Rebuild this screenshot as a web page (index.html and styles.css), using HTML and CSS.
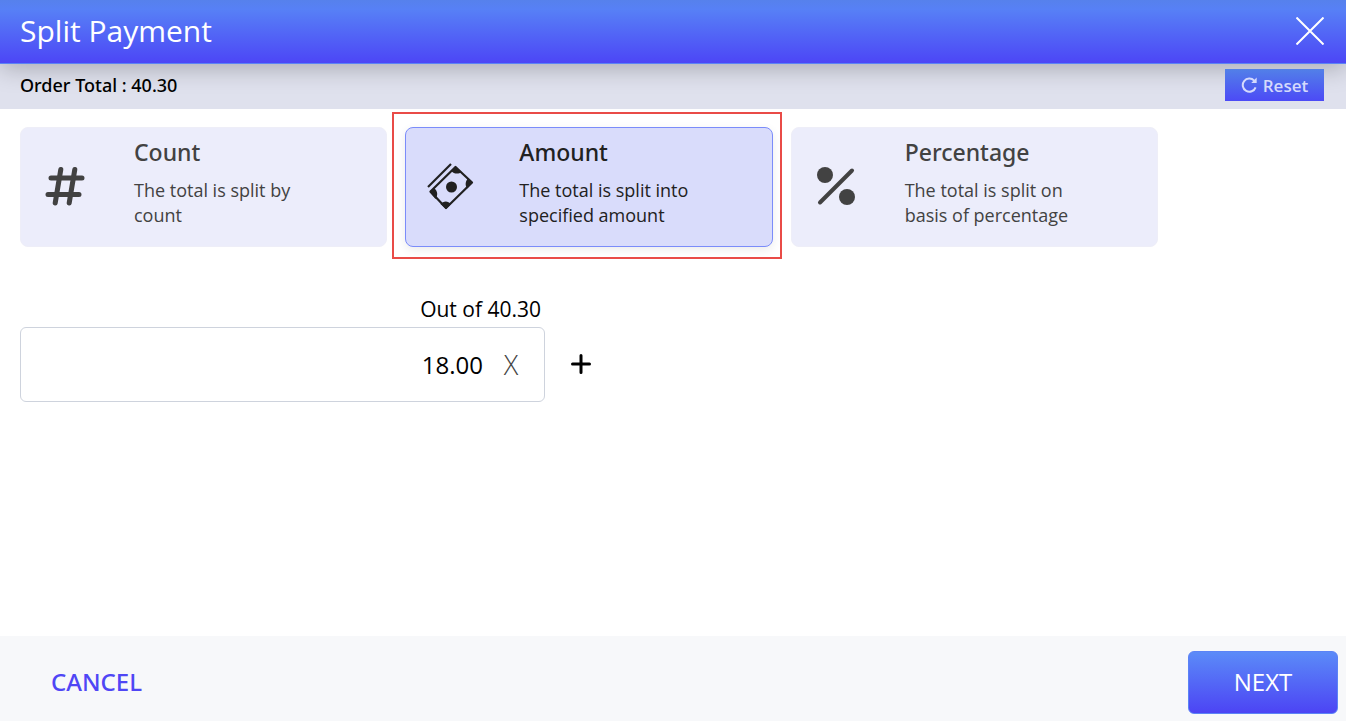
FILE: index.html
```html
<!DOCTYPE html>
<html lang="en">
<head>
<meta charset="utf-8">
<meta name="viewport" content="width=device-width, initial-scale=1">
<title>Split Payment</title>
<link rel="stylesheet" href="styles.css">
</head>
<body>
<div class="dialog">
  <header class="header">
    <h1 class="title">Split Payment</h1>
    <button class="close" type="button" aria-label="Close">
      <svg width="28" height="28" viewBox="0 0 28 28" fill="none" stroke="#fff" stroke-width="2"><path d="M.5.5l27 27M27.5.5l-27 27"/></svg>
    </button>
  </header>
  <div class="order-bar">
    <span class="order-total">Order Total : 40.30</span>
    <button class="reset" type="button">
      <svg width="16" height="16" viewBox="0 0 16 16" fill="none" stroke="currentColor" stroke-width="2"><path d="M14.600 10.300A6.600 6.600 0 1 1 13.200 3.600"/><path d="M15.700 .5v5.500h-5.500z" fill="currentColor" stroke="none"/></svg>
      Reset
    </button>
  </div>
  <main class="content">
    <div class="modes">
      <button class="mode" type="button" aria-pressed="false">
        <svg class="mode-icon" width="48" height="48" viewBox="0 0 48 48" fill="none" stroke="currentColor" stroke-width="5" stroke-linecap="round"><path d="M9 15h31M6 31.500h31"/><path d="M18.800 6.500L13.200 40M32.800 6.500L27.200 40"/></svg>
        <span class="mode-text">
          <span class="mode-name">Count</span>
          <span class="mode-note">The total is split by count</span>
        </span>
      </button>
      <button class="mode mode-selected" type="button" aria-pressed="true">
        <svg class="mode-icon" width="48" height="48" viewBox="0 0 48 48" fill="none" stroke="currentColor" stroke-width="2.200"><path d="M1 24L24 1"/><path d="M3.500 28.500L28.500 4L45 19.500L19 45z" stroke-linejoin="round"/><circle cx="24.500" cy="24" r="5.500" fill="currentColor" stroke="none"/><path d="M24 8L28.500 3l6 6c-3 2.500-7.500 2-10.500-1zM45.800 19.500l-5.500 6c-2.500-3-2-7.500 1-10.500zM2.500 29l4.500-4c4 3 4 7.500 1.500 11zM13.500 41c3-3.500 7.500-3.500 10.500 0l-5 5z" fill="currentColor" stroke="none"/></svg>
        <span class="mode-text">
          <span class="mode-name">Amount</span>
          <span class="mode-note">The total is split into specified amount</span>
        </span>
      </button>
      <button class="mode" type="button" aria-pressed="false">
        <svg class="mode-icon" width="48" height="48" viewBox="0 0 48 48" fill="currentColor"><circle cx="12" cy="12" r="8"/><circle cx="34" cy="34" r="8"/><path d="M7 39.500L39 7.500" fill="none" stroke="currentColor" stroke-width="4" stroke-linecap="round"/></svg>
        <span class="mode-text">
          <span class="mode-name">Percentage</span>
          <span class="mode-note">The total is split on basis of percentage</span>
        </span>
      </button>
    </div>
    <div class="split">
      <label class="split-label" for="amount">Out of 40.30</label>
      <div class="split-field">
        <input class="split-input" id="amount" type="text" inputmode="decimal" value="18.00">
        <button class="clear" type="button" aria-label="Remove amount">X</button>
      </div>
      <button class="add" type="button" aria-label="Add amount">
        <svg width="20" height="20" viewBox="0 0 20 20" fill="none" stroke="currentColor" stroke-width="3" stroke-linecap="round"><path d="M10 1.500v17M1.500 10h17"/></svg>
      </button>
    </div>
  </main>
  <footer class="footer">
    <button class="cancel" type="button">CANCEL</button>
    <button class="next" type="button">NEXT</button>
  </footer>
</div>
</body>
</html>
```
FILE: styles.css
```css
* {
  box-sizing: border-box;
}

body {
  margin: 0;
  background: #fff;
  color: #000;
  font-family: "Open Sans", "Noto Sans", sans-serif;
}

button,
input {
  margin: 0;
  padding: 0;
  border: 0;
  background: none;
  color: inherit;
  font: inherit;
}

button {
  cursor: pointer;
}

svg {
  display: block;
}

.dialog {
  display: flex;
  flex-direction: column;
  min-height: 100vh;
}

.header {
  position: relative;
  display: flex;
  align-items: center;
  justify-content: space-between;
  height: 64px;
  padding: 0 22px 2px 20px;
  border-bottom: 1px solid #5b83f6;
  background: linear-gradient(#5681ec 0%, #5780f6 15%, #4c46f6 100%);
  box-shadow: 0 4px 24px rgba(0, 0, 0, 0.25);
  color: #fff;
}

.title {
  margin: 0;
  font-size: 30px;
  font-weight: 400;
  line-height: 40px;
}

.order-bar {
  display: flex;
  align-items: center;
  justify-content: space-between;
  height: 45px;
  padding: 0 22px 0 20px;
  background: #dfe1ed;
}

.order-total,
.mode-name,
.cancel {
  font-family: "Noto Sans", "Open Sans", sans-serif;
  font-weight: 500;
}

.order-total {
  padding-bottom: 4px;
  font-size: 18px;
  line-height: 24px;
}

.header,
.reset {
  z-index: 1;
}

.reset {
  position: relative;
  display: flex;
  align-items: center;
  justify-content: center;
  gap: 6px;
  width: 99px;
  height: 32px;
  margin-bottom: 3px;
  background: linear-gradient(#5280e8, #4c4af6);
  color: #d5dafc;
  font-size: 17px;
  font-weight: 600;
}

.content {
  flex: 1;
  padding: 18px 20px;
}

.modes {
  display: grid;
  grid-template-columns: repeat(3, 1fr);
  gap: 18px;
  margin-right: 168px;
}

.mode {
  position: relative;
  display: flex;
  align-items: center;
  gap: 44px;
  min-height: 120px;
  padding: 0 64px 0 21px;
  border: 1px solid #eeeef8;
  border-radius: 8px;
  background: #ecedfb;
  color: #424242;
  text-align: left;
}

.mode-selected {
  border-color: #7b8cfa;
  background: #d9dcfb;
  box-shadow: 0 3px 10px rgba(0, 0, 0, 0.08);
  color: #212121;
}

.mode-selected::after {
  content: "";
  position: absolute;
  inset: -16px -10px -13px -14px;
  border: 2px solid #e94b47;
  pointer-events: none;
}

.mode-icon {
  flex: none;
}

.mode-text {
  display: flex;
  flex-direction: column;
  gap: 10px;
  padding-bottom: 10px;
}

.mode-name {
  font-size: 23px;
  line-height: 32px;
}

.mode-note {
  max-width: 180px;
  font-size: 18px;
  line-height: 25px;
}

.split {
  display: grid;
  grid-template-columns: minmax(0, 525px) auto;
  column-gap: 16px;
  row-gap: 3px;
  margin-top: 47px;
}

.split-label {
  padding-right: 4px;
  font-size: 21px;
  line-height: 30px;
  text-align: right;
}

.split-field {
  display: flex;
  grid-row: 2;
  align-items: center;
  height: 75px;
  border: 1px solid #ced3dd;
  border-radius: 6px;
}

.split-input {
  flex: 1;
  min-width: 0;
  height: 100%;
  font-size: 24px;
  text-align: right;
  outline: 0;
}

.clear {
  width: 56px;
  margin-right: 5px;
  color: #444;
  font-size: 27px;
  font-weight: 300;
}

.add {
  display: grid;
  grid-row: 2;
  place-items: center;
  justify-self: start;
  width: 40px;
  padding-bottom: 2px;
}

.footer {
  display: flex;
  align-items: center;
  justify-content: space-between;
  height: 85px;
  padding: 8px 8px 0 20px;
  background: #f7f8fa;
}

.cancel {
  height: 62px;
  padding: 0 31px 2px;
  color: #4f46f5;
  font-size: 24px;
}

.next {
  width: 150px;
  height: 63px;
  padding-bottom: 2px;
  border: 1px solid #5b83f6;
  border-radius: 6px;
  background: linear-gradient(#5b8bf8, #4c44f4);
  color: #fff;
  font-size: 24px;
}
```
